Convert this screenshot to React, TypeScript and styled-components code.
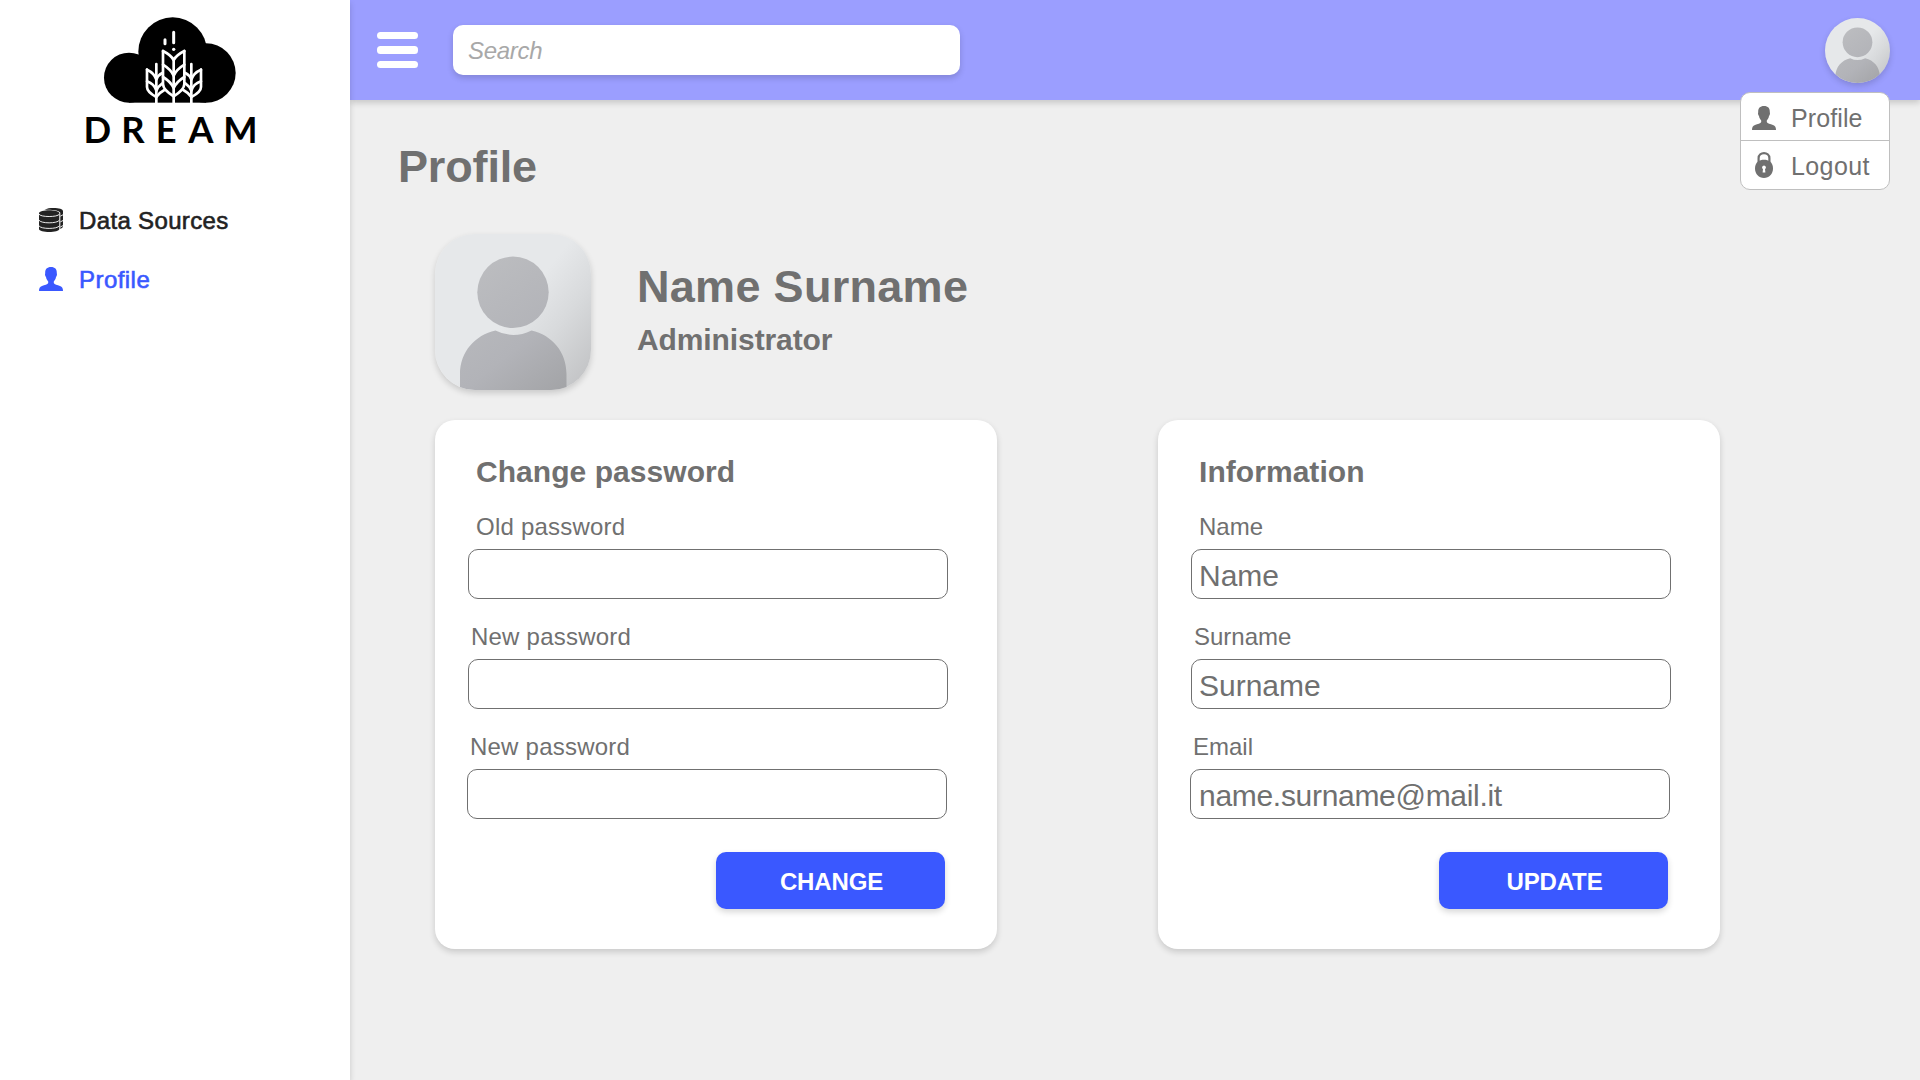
import React from "react";
import styled, { createGlobalStyle } from "styled-components";

const GlobalStyle = createGlobalStyle`
  *, *::before, *::after { box-sizing: border-box; }
  body {
    margin: 0;
    background: #efefef;
    color: #707070;
    font-family: "Liberation Sans", Arial, Helvetica, sans-serif;
  }
  h1, h2, p { margin: 0; }
  input, button { font-family: inherit; }
`;

const Layout = styled.div`
  display: grid;
  grid-template-columns: 350px 1fr;
  width: 1920px;
  height: 1080px;
  overflow: hidden;
`;

const Sidebar = styled.aside`
  position: relative;
  z-index: 2;
  background: #fff;
  box-shadow: 0 3px 6px rgba(0, 0, 0, 0.16);
`;

const LogoArt = styled.svg`
  display: block;
  width: 200px;
  height: 160px;
  margin-left: 70px;
`;

const Nav = styled.nav`
  display: flex;
  flex-direction: column;
  gap: 29px;
  padding: 45px 0 0 39px;
`;

const NavItem = styled.a<{ $active?: boolean }>`
  display: flex;
  align-items: center;
  gap: 16px;
  height: 30px;
  color: ${(p) => (p.$active ? "#3a58ff" : "#222")};
  font-size: 24px;
  line-height: 30px;
  letter-spacing: ${(p) => (p.$active ? "0.45px" : "0.35px")};
  -webkit-text-stroke: 0.6px currentColor;
`;

const NavLabel = styled.span`
  padding-top: 2px;
`;

const Glyph = styled.svg<{ $w?: number; $h?: number }>`
  display: block;
  flex: none;
  width: ${(p) => p.$w ?? 24}px;
  height: ${(p) => p.$h ?? 24}px;
  fill: currentColor;
`;

const Main = styled.div`
  display: flex;
  flex-direction: column;
`;

const Header = styled.header`
  position: relative;
  display: flex;
  align-items: center;
  height: 100px;
  padding: 0 30px 0 27px;
  background: #9b9eff;
  box-shadow: 0 3px 6px rgba(0, 0, 0, 0.16);
`;

const MenuButton = styled.div`
  display: flex;
  flex-direction: column;
  gap: 7px;
  width: 41px;
`;

const MenuBar = styled.span`
  height: 7.3px;
  border-radius: 3.5px;
  background: #fff;
`;

const Search = styled.input`
  width: 507px;
  height: 50px;
  margin-left: 35px;
  padding: 2px 15px 0;
  border: 0;
  border-radius: 10px;
  background: #fff;
  box-shadow: 0 3px 6px rgba(0, 0, 0, 0.16);
  font-size: 24px;
  font-style: italic;
  letter-spacing: -0.3px;
  &::placeholder { color: #a8a8a8; opacity: 1; }
`;

const AvatarFrame = styled.div<{ $size: number; $radius: string }>`
  flex: none;
  width: ${(p) => p.$size}px;
  height: ${(p) => p.$size}px;
  border-radius: ${(p) => p.$radius};
  overflow: hidden;
  box-shadow: 0 3px 6px rgba(0, 0, 0, 0.16);
  svg { display: block; width: 100%; height: 100%; }
`;

const HeaderAvatar = styled.div`
  margin-left: auto;
  padding-top: 1px;
`;

const Dropdown = styled.div`
  position: absolute;
  top: 92px;
  right: 30px;
  z-index: 3;
  width: 150px;
  border: 1px solid #bfbfbf;
  border-radius: 10px;
  background: #fff;
`;

const DropdownItem = styled.div`
  display: flex;
  align-items: center;
  height: 47px;
  padding: 3px 0 0 10px;
  font-size: 25px;
  line-height: 30px;
  letter-spacing: 0.1px;
  & + & {
    height: 49px;
    padding-top: 0;
    border-top: 1px solid #bfbfbf;
    letter-spacing: 0.4px;
  }
`;

const DropdownLabel = styled.span<{ $drop?: number }>`
  padding-top: ${(p) => p.$drop ?? 0}px;
`;

const IconSlot = styled.span`
  display: flex;
  justify-content: center;
  width: 26px;
  margin-right: 14px;
`;

const Content = styled.main`
  padding: 40px 0 0 85px;
`;

const PageTitle = styled.h1`
  margin-left: -37px;
  font-size: 45px;
  line-height: 54px;
  letter-spacing: -0.15px;
`;

const Person = styled.section`
  display: flex;
  align-items: flex-start;
  height: 186px;
  margin-top: 40px;
`;

const PersonText = styled.div`
  padding: 26px 0 0 46px;
`;

const PersonName = styled.p`
  font-size: 45px;
  font-weight: 700;
  line-height: 54px;
  letter-spacing: 0.3px;
`;

const Role = styled.p`
  padding-top: 8px;
  font-size: 30px;
  font-weight: 700;
  line-height: 36px;
  letter-spacing: -0.1px;
`;

const Cards = styled.div`
  display: flex;
  gap: 161px;
`;

const Card = styled.form`
  width: 562px;
  height: 529px;
  padding: 34px 0 0 33px;
  border-radius: 20px;
  background: #fff;
  box-shadow: 0 3px 6px rgba(0, 0, 0, 0.16);
`;

const CardTitle = styled.h2`
  margin: 0 0 22px 8px;
  font-size: 30px;
  line-height: 36px;
  letter-spacing: 0.05px;
`;

const Fields = styled.div`
  display: flex;
  flex-direction: column;
  gap: 23px;
`;

const Field = styled.div<{ $shift?: number }>`
  display: flex;
  flex-direction: column;
  gap: 7px;
  margin-left: ${(p) => p.$shift ?? 0}px;
`;

const Label = styled.label<{ $indent: number; $tracking: number }>`
  padding-left: ${(p) => p.$indent}px;
  font-size: 24px;
  line-height: 30px;
  letter-spacing: ${(p) => p.$tracking}px;
`;

const Input = styled.input<{ $pad: number; $tracking: number }>`
  width: 480px;
  height: 50px;
  padding: 3px 6px 0 ${(p) => p.$pad}px;
  border: 1px solid #707070;
  border-radius: 10px;
  background: #fff;
  color: #707070;
  font-size: 30px;
  letter-spacing: ${(p) => p.$tracking}px;
`;

const Submit = styled.button`
  display: block;
  width: 229px;
  height: 57px;
  margin: 33px 0 0 248px;
  padding: 3px 0 0 2px;
  border: 0;
  border-radius: 10px;
  background: #3a58ff;
  box-shadow: 0 3px 6px rgba(0, 0, 0, 0.16);
  color: #fff;
  font-size: 24px;
  font-weight: 700;
  letter-spacing: -0.15px;
`;

const leafPair = (cx: number, w: number, y: number, d: number) =>
  `M${cx - w} ${y}Q${cx - w / 4} ${y + d * 0.45} ${cx} ${y + d}Q${cx + w / 4} ${y + d * 0.45} ${cx + w} ${y}`;

function Logo() {
  return (
    <LogoArt viewBox="0 0 600 480" aria-label="Dream">
      <circle cx="177" cy="233" r="75" />
      <circle cx="308" cy="155" r="103" />
      <circle cx="408" cy="219" r="89" />
      <rect x="177" y="190" width="231" height="118" />
      <g fill="none" stroke="#fff" strokeWidth="8" strokeLinecap="round" strokeLinejoin="round">
        <path d="M311 97V128M285 119V131" strokeWidth="9" />
        <path strokeLinecap="butt" d="M311 178V309M259 290V309M364 290V309" />
        <path d="M259 192V290M364 192V290" />
        <path d="M279 153V252Q279 269 311 289Q343 269 343 252V153" />
        <path d={leafPair(311, 32, 153, 27)} />
        <path d={leafPair(311, 32, 194, 33)} />
        <path d={leafPair(311, 32, 231, 33)} />
        <path d="M231 209V261Q231 276 259 291Q268 278 283 270" />
        <path d="M393 209V261Q393 276 364 291Q355 278 340 270" />
        <path d="M231 209Q253 219 259 239Q264 225 277 219M231 244Q253 252 259 272Q264 259 277 250" />
        <path d="M393 209Q370 219 364 239Q359 225 346 219M393 244Q370 252 364 272Q359 259 346 250" />
      </g>
      <circle cx="311" cy="148" r="5" fill="#fff" />
      <text
        x="40.500 154 257 355 459.500"
        y="429"
        fontFamily="Lato, sans-serif"
        fontSize="109"
        fontWeight="700"
      >
        DREAM
      </text>
    </LogoArt>
  );
}

function DataIcon() {
  return (
    <Glyph viewBox="0 0 24 24">
      <path d="M5.5 1.7C8 .4 11 0 14.5 0C20 0 24 1.3 24 3V18.500Q24 20 21.300 20.900V4.800C20.500 2.600 14 1.300 5.500 1.700Z" />
      <path d="M0 5.200C0 1.300 20.300 1.300 20.300 5.200V21C20.300 25 0 25 0 21Z" />
      <path
        d="M0 6.200C1.500 9.300 18.800 9.300 20.300 6.200M0 12.200C1.500 15.700 18.800 15.700 20.300 12.200M0 17.800C1.500 21.300 18.800 21.300 20.300 17.800M21.300 8.200L24 6.800M21.300 13.900L24 12.500M21.300 19L24 17.600"
        fill="none"
        stroke="#fff"
        strokeWidth="0.9"
      />
    </Glyph>
  );
}

function UserIcon() {
  return (
    <Glyph viewBox="0 0 24 24">
      <path d="M12 0C8 0 6 2.200 6.200 6.200C5.700 7.500 6.200 9.300 7 10C7.300 12 8.200 13.400 9.200 14.400V16C8.700 17.400 5.600 18 3 19C.8 19.900 0 21.200 0 24H24C24 21.200 23.200 19.900 21 19C18.400 18 15.300 17.400 14.800 16V14.400C15.800 13.400 16.700 12 17 10C17.800 9.300 18.300 7.500 17.800 6.200C18 2.200 16 0 12 0Z" />
    </Glyph>
  );
}

function LockIcon() {
  return (
    <Glyph viewBox="0 0 18 26" $w={18} $h={26}>
      <path d="M3.600 11V6.200C3.600-.6 14.400-.6 14.400 6.200V11" fill="none" stroke="currentColor" strokeWidth="2.200" />
      <path d="M3 9.500C6 7.200 12 7.200 15 9.500C17 11 18 13.500 18 16.500C18 22 14 26 9 26S0 22 0 16.500C0 13.500 1 11 3 9.500Z" />
      <path d="M9 13.400A2 2 0 0 0 8 17.100L7.600 20.400H10.400L10 17.100A2 2 0 0 0 9 13.400Z" fill="#fff" />
    </Glyph>
  );
}

function Avatar({ id, size, radius }: { id: string; size: number; radius: string }) {
  return (
    <AvatarFrame $size={size} $radius={radius}>
      <svg viewBox="0 0 156 156">
        <defs>
          <linearGradient id={`${id}-back`} x1="0" y1="0.1" x2="1" y2="0.9">
            <stop offset="0.5" stopColor="#e6e8ea" />
            <stop offset="0.72" stopColor="#d8dadc" />
            <stop offset="1" stopColor="#c2c3c5" />
          </linearGradient>
          <linearGradient id={`${id}-front`} gradientUnits="userSpaceOnUse" x1="40" y1="30" x2="135" y2="150">
            <stop offset="0" stopColor="#bcbdc0" />
            <stop offset="0.6" stopColor="#b2b3b8" />
            <stop offset="1" stopColor="#a3a4a7" />
          </linearGradient>
        </defs>
        <rect width="156" height="156" fill={`url(#${id}-back)`} />
        <g fill={`url(#${id}-front)`}>
          <circle cx="78" cy="58.300" r="35.700" />
          <path d="M60.500 96.500Q78 105.500 96.500 96.500C117 101 131.500 118 131.500 140V156H25V140C25 118 40 101 60.500 96.500Z" />
        </g>
      </svg>
    </AvatarFrame>
  );
}

type FieldDef = {
  label: string;
  indent: number;
  shift?: number;
  value?: string;
  pad?: number;
  tracking?: number;
};

const passwordFields: FieldDef[] = [
  { label: "Old password", indent: 8 },
  { label: "New password", indent: 3 },
  { label: "New password", indent: 3, shift: -1 },
];

const infoFields: FieldDef[] = [
  { label: "Name", indent: 8, value: "Name" },
  { label: "Surname", indent: 3, value: "Surname" },
  { label: "Email", indent: 3, shift: -1, value: "name.surname@mail.it", pad: 8, tracking: -0.3 },
];

function FormCard({
  title,
  fields,
  action,
  labelTracking,
}: {
  title: string;
  fields: FieldDef[];
  action: string;
  labelTracking: number;
}) {
  return (
    <Card onSubmit={(e) => e.preventDefault()}>
      <CardTitle>{title}</CardTitle>
      <Fields>
        {fields.map((f, i) => (
          <Field key={i} $shift={f.shift}>
            <Label $indent={f.indent} $tracking={labelTracking}>{f.label}</Label>
            <Input
              $pad={f.pad ?? 7}
              $tracking={f.tracking ?? 0}
              type={f.value ? "text" : "password"}
              defaultValue={f.value}
              spellCheck={false}
            />
          </Field>
        ))}
      </Fields>
      <Submit type="submit">{action}</Submit>
    </Card>
  );
}

export default function App() {
  return (
    <>
      <GlobalStyle />
      <Layout>
        <Sidebar>
          <Logo />
          <Nav>
            <NavItem>
              <DataIcon />
              <NavLabel>Data Sources</NavLabel>
            </NavItem>
            <NavItem $active>
              <UserIcon />
              <NavLabel>Profile</NavLabel>
            </NavItem>
          </Nav>
        </Sidebar>
        <Main>
          <Header>
            <MenuButton>
              <MenuBar />
              <MenuBar />
              <MenuBar />
            </MenuButton>
            <Search placeholder="Search" />
            <HeaderAvatar>
              <Avatar id="header" size={65} radius="50%" />
            </HeaderAvatar>
            <Dropdown>
              <DropdownItem>
                <IconSlot><UserIcon /></IconSlot>
                <DropdownLabel>Profile</DropdownLabel>
              </DropdownItem>
              <DropdownItem>
                <IconSlot><LockIcon /></IconSlot>
                <DropdownLabel $drop={2}>Logout</DropdownLabel>
              </DropdownItem>
            </Dropdown>
          </Header>
          <Content>
            <PageTitle>Profile</PageTitle>
            <Person>
              <Avatar id="person" size={156} radius="40px" />
              <PersonText>
                <PersonName>Name Surname</PersonName>
                <Role>Administrator</Role>
              </PersonText>
            </Person>
            <Cards>
              <FormCard title="Change password" fields={passwordFields} action="CHANGE" labelTracking={0.22} />
              <FormCard title="Information" fields={infoFields} action="UPDATE" labelTracking={0} />
            </Cards>
          </Content>
        </Main>
      </Layout>
    </>
  );
}
